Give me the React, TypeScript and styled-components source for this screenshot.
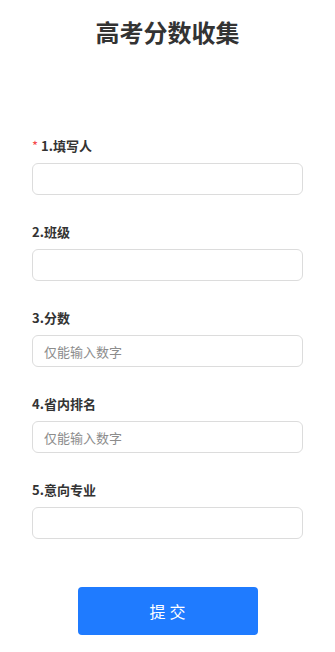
import styled, { createGlobalStyle } from "styled-components";

const GlobalStyle = createGlobalStyle`
    body {
        margin: 0;
        background: #fff;
        font-family: "Noto Sans CJK SC", "Noto Sans", sans-serif;
        color: #333;
    }
`

const StyledPage = styled.div`
    padding: 16px 32px 0;
`

const StyledTitle = styled.h1`
    color: #333;
    font-size: 24px;
    font-weight: 700;
    line-height: 32px;
    margin: 0 0 89px;
    text-align: center;
`

const StyledField = styled.div`
    display: flex;
    flex-direction: column;
    gap: 8px;
    margin-bottom: 28px;
`

const StyledLabel = styled.label`
    color: #333;
    font-size: 13px;
    font-weight: 700;
    line-height: 18px;
    display: flex;
    align-items: center;
`

const StyledStar = styled.span`
    color: #f5484a;
    margin-right: 3px;
    font-weight: 400;
`

const StyledInput = styled.input`
    box-sizing: border-box;
    width: 100%;
    height: 32px;
    border: 1px solid #dcdcdc;
    border-radius: 6px;
    padding: 0 11px;
    font-family: inherit;
    font-size: 13px;
    color: #333;
    outline: none;

    &::placeholder {
        color: #8c8c8c;
    }
`

const StyledSubmit = styled.button`
    display: block;
    margin: 48px auto 0;
    width: 180px;
    height: 48px;
    border: none;
    border-radius: 4px;
    background-color: #1f7bff;
    color: #fff;
    font-family: inherit;
    font-size: 16px;
    letter-spacing: 4px;
    text-indent: 4px;
`

const fields = [
    { label: "1.填写人", required: true },
    { label: "2.班级" },
    { label: "3.分数", placeholder: "仅能输入数字" },
    { label: "4.省内排名", placeholder: "仅能输入数字" },
    { label: "5.意向专业" },
];

const App = () => {
    return (
        <StyledPage>
            <GlobalStyle />
            <StyledTitle>高考分数收集</StyledTitle>
            <form onSubmit={(e) => e.preventDefault()}>
                {fields.map((item, key) => (
                    <StyledField key={key}>
                        <StyledLabel htmlFor={`field-${key}`}>
                            {item.required ? <StyledStar>*</StyledStar> : ''}
                            {item.label}
                        </StyledLabel>
                        <StyledInput id={`field-${key}`} placeholder={item.placeholder} />
                    </StyledField>
                ))}
                <StyledSubmit type="submit">提交</StyledSubmit>
            </form>
        </StyledPage>
    )
}

export default App;
